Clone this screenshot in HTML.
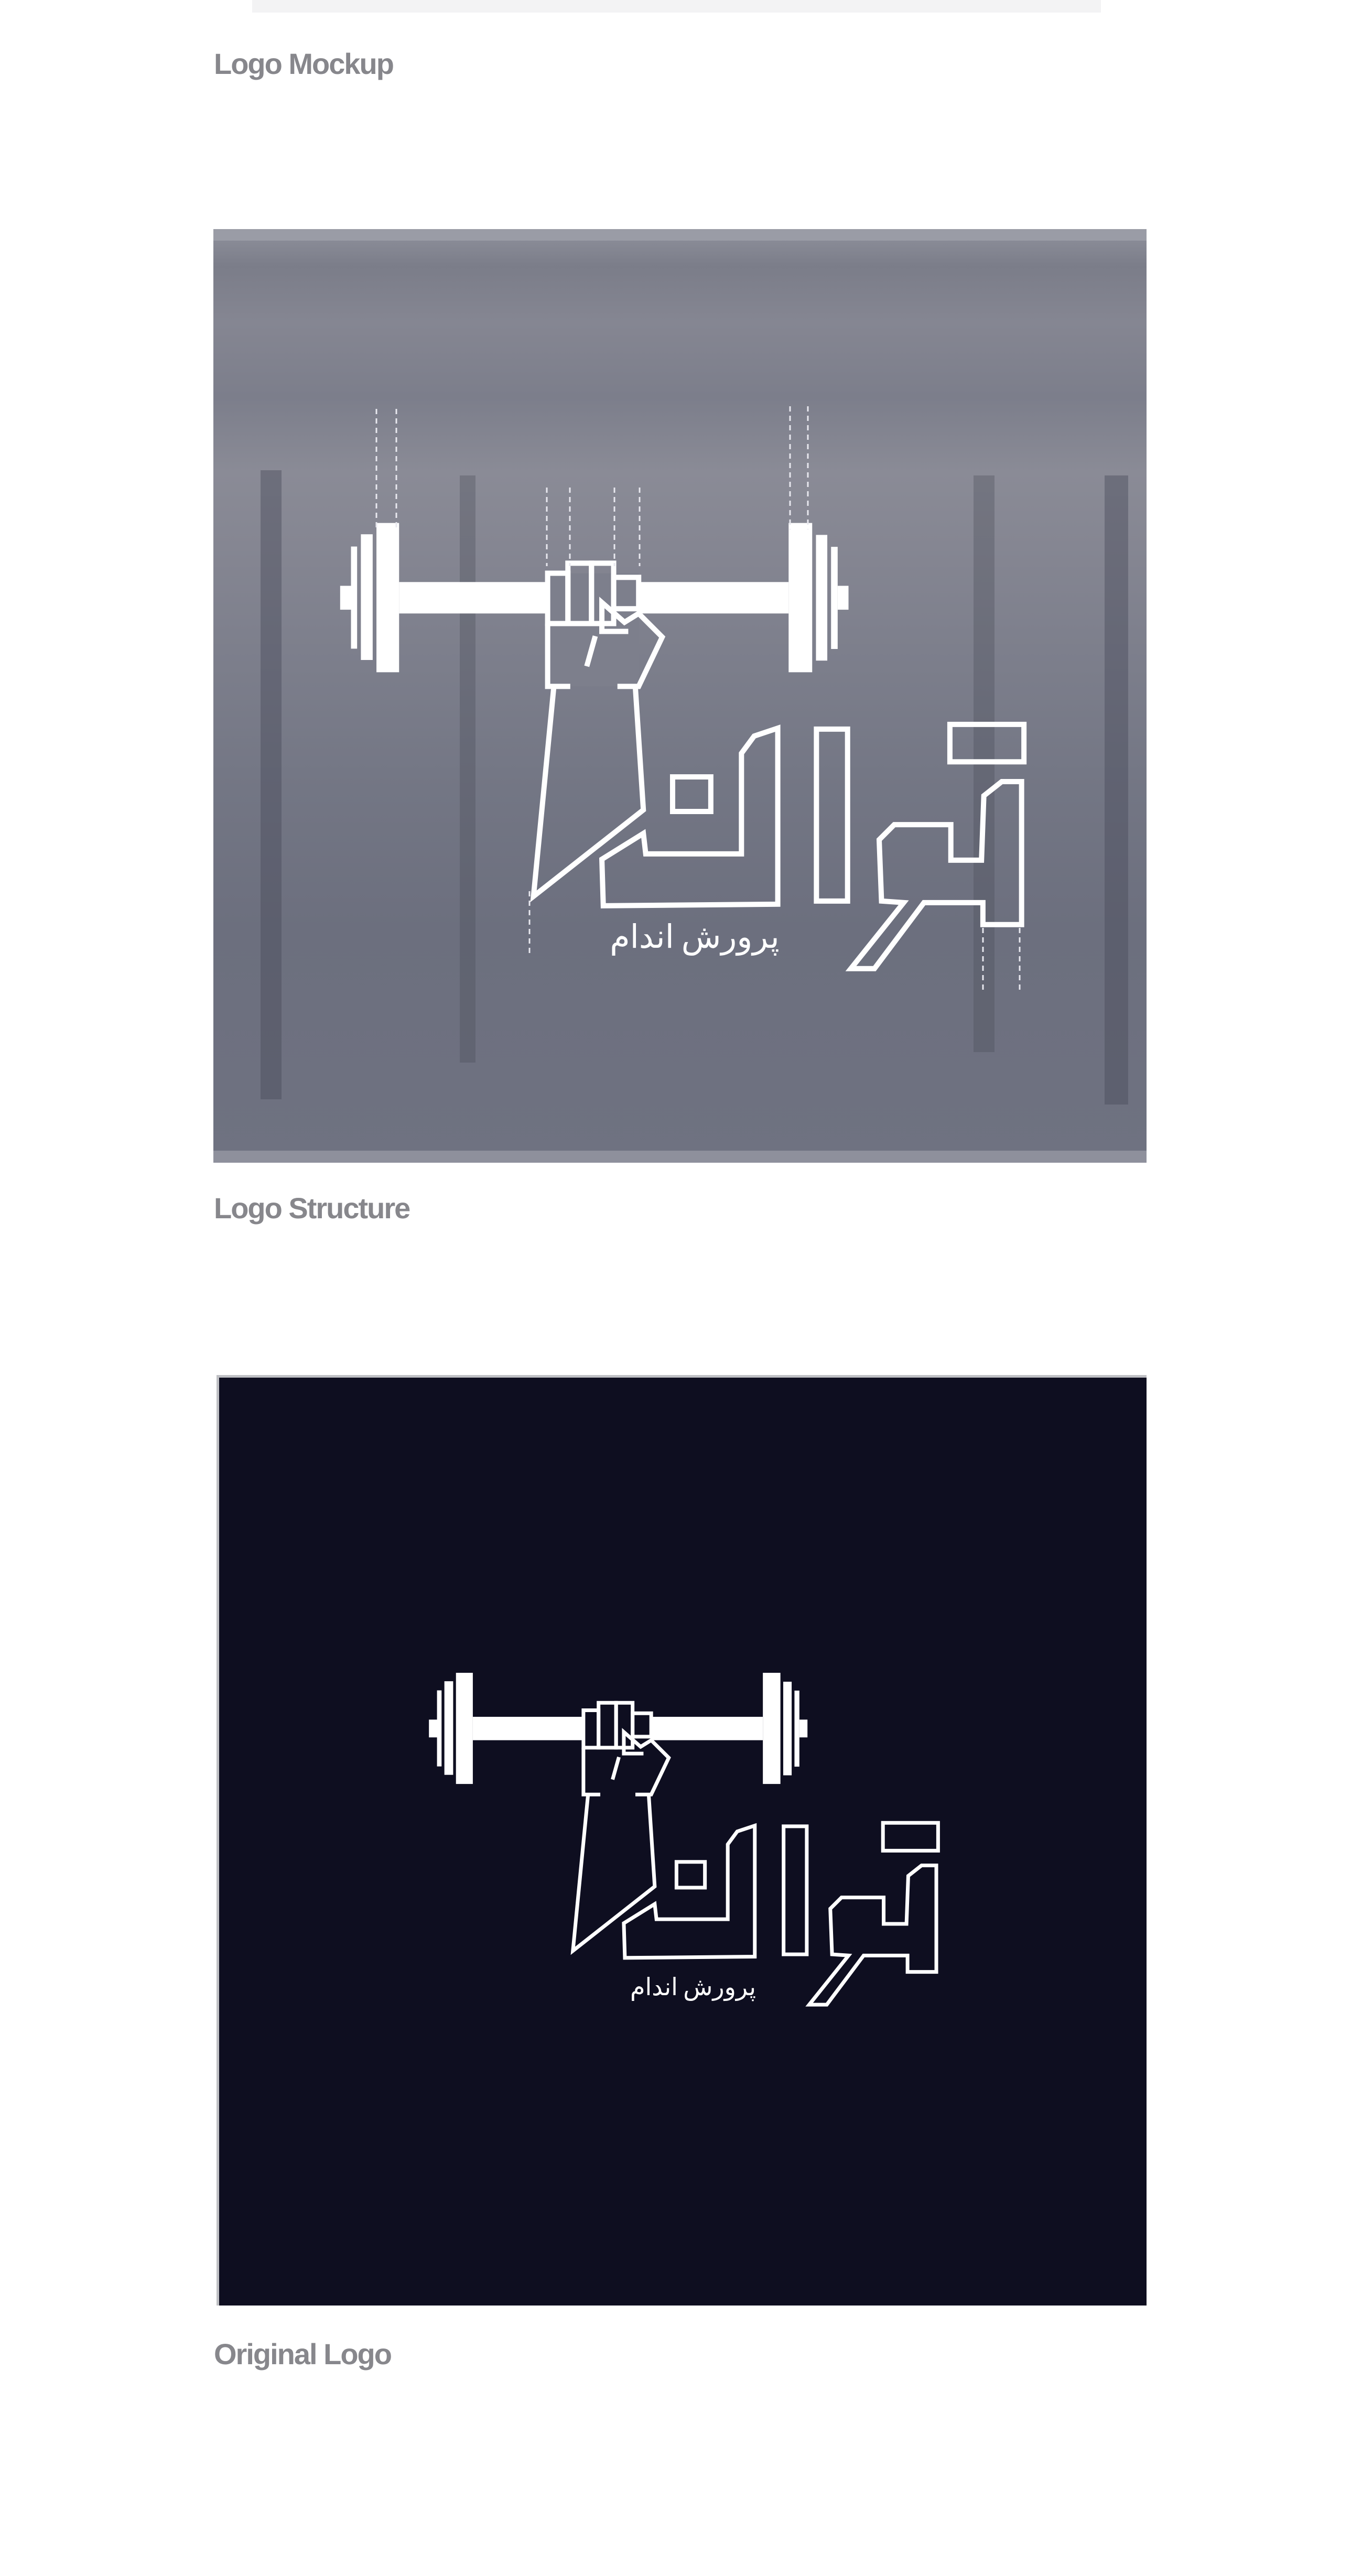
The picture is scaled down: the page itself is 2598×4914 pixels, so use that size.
<!DOCTYPE html>
<html><head><meta charset="utf-8">
<style>
html,body{margin:0;padding:0;background:#fff;}
body{width:2598px;height:4914px;position:relative;overflow:hidden;font-family:"Liberation Sans",sans-serif;}
.cap{position:absolute;left:408px;font-size:56px;font-weight:bold;color:#87878c;letter-spacing:-2px;line-height:1;}
</style></head><body>
<div style="position:absolute;left:481px;top:0;width:1619px;height:24px;background:#f3f3f4;"></div>
<div class="cap" style="top:94px;">Logo Mockup</div>

<div style="position:absolute;left:407px;top:437px;width:1780px;height:1781px;background:linear-gradient(180deg,#8f919c 0%,#7b7d89 4%,#858692 10%,#7c7e8b 18%,#8a8b96 26%,#858692 34%,#7d7f8c 45%,#737684 60%,#6c6f7e 75%,#6f7281 100%);overflow:hidden;">
 <div style="position:absolute;left:0;top:0;width:100%;height:22px;background:#9a9ca6"></div>
 <div style="position:absolute;left:0;top:1758px;width:100%;height:23px;background:#8e909c"></div>
 <div style="position:absolute;left:90px;top:460px;width:40px;height:1200px;background:#4a4c5a;opacity:.45"></div>
 <div style="position:absolute;left:470px;top:470px;width:30px;height:1120px;background:#4a4c5a;opacity:.35"></div>
 <div style="position:absolute;left:1450px;top:470px;width:40px;height:1100px;background:#4a4c5a;opacity:.35"></div>
 <div style="position:absolute;left:1700px;top:470px;width:45px;height:1200px;background:#4a4c5a;opacity:.45"></div>
</div>

<div class="cap" style="top:2277px;">Logo Structure</div>

<div style="position:absolute;left:413px;top:2623px;width:1774px;height:1775px;background:#bfc0c4;"></div>
<div style="position:absolute;left:418px;top:2628px;width:1769px;height:1770px;background:#0e0e20;"></div>

<div class="cap" style="top:4463px;">Original Logo</div>

<svg style="position:absolute;left:0;top:0" width="2598" height="4914" viewBox="0 0 2598 4914">
<defs>
<g id="lg">
 <g fill="#fff">
  <rect x="57" y="292" width="24" height="76"/>
  <rect x="80" y="167" width="13" height="325"/>
  <rect x="101" y="128" width="25" height="400"/>
  <rect x="134" y="92" width="48" height="475"/>
  <rect x="182" y="280" width="826" height="100"/>
  <rect x="1008" y="92" width="50" height="475"/>
  <rect x="1066" y="130" width="24" height="400"/>
  <rect x="1098" y="168" width="14" height="325"/>
  <rect x="1112" y="292" width="23" height="76"/>
 </g>
 <g fill="none" stroke="#fff" stroke-linejoin="miter">
  <rect x="497" y="252" width="193" height="360" style="fill:var(--fc)" vector-effect="non-scaling-stroke" stroke="none"/>
  <rect x="497" y="252" width="43" height="160" vector-effect="non-scaling-stroke"/>
  <rect x="540" y="220" width="50" height="192" vector-effect="non-scaling-stroke"/>
  <rect x="590" y="220" width="47" height="192" vector-effect="non-scaling-stroke"/>
  <rect x="637" y="265" width="53" height="100" vector-effect="non-scaling-stroke"/>
  <path d="M497 412 L497 612 L545 612 M645 612 L690 612 L740 455 L690 380 L660 408 L612 345 L612 437 L668 437 M598 452 L580 548" vector-effect="non-scaling-stroke"/>
  <path d="M510 615 L467 1280 L700 1005 L683 615" vector-effect="non-scaling-stroke"/>
  <path d="M612 1162 L700 1080 L705 1145 L908 1145 L908 825 L935 770 L985 745 L985 1305 L615 1310 Z" vector-effect="non-scaling-stroke"/>
  <rect x="762" y="900" width="81" height="110" vector-effect="non-scaling-stroke"/>
  <rect x="1067" y="748" width="66" height="547" vector-effect="non-scaling-stroke"/>
  <path d="M1502 915 L1460 915 L1422 960 L1417 1165 L1352 1165 L1352 1052 L1232 1052 L1200 1100 L1205 1295 L1252 1300 L1140 1510 L1190 1510 L1295 1300 L1420 1300 L1420 1370 L1502 1370 Z" vector-effect="non-scaling-stroke"/>
  <rect x="1350" y="733" width="157" height="119" vector-effect="non-scaling-stroke"/>
 </g>
</g>
</defs>
<!-- original logo -->
<g transform="translate(780 3150) scale(0.6698 0.4464)" stroke-width="7" style="--fc:#0e0e20">
 <use href="#lg"/>
</g>
<text x="1322" y="3806" text-anchor="middle" fill="#fff" font-size="46" font-family="'Noto Sans CJK SC','DejaVu Sans',sans-serif">پرورش اندام</text>

<!-- structure logo -->
<g transform="translate(-450 -3288) scale(1.343)">
 <g transform="translate(780 3150) scale(0.6698 0.4464)" stroke-width="10" style="--fc:#7d7f8c">
  <use href="#lg"/>
 </g>
</g>
<text x="1325" y="1808" text-anchor="middle" fill="#fff" font-size="62" font-family="'Noto Sans CJK SC','DejaVu Sans',sans-serif">پرورش اندام</text>
<g stroke="#e8e8ef" stroke-width="3" stroke-dasharray="10 8" fill="none">
 <line x1="718" y1="780" x2="718" y2="1010"/>
 <line x1="756" y1="780" x2="756" y2="1010"/>
 <line x1="1507" y1="775" x2="1507" y2="1010"/>
 <line x1="1541" y1="775" x2="1541" y2="1010"/>
 <line x1="1043" y1="930" x2="1043" y2="1080"/>
 <line x1="1087" y1="930" x2="1087" y2="1080"/>
 <line x1="1172" y1="930" x2="1172" y2="1080"/>
 <line x1="1220" y1="930" x2="1220" y2="1080"/>
 <line x1="1010" y1="1700" x2="1010" y2="1820"/>
 <line x1="1875" y1="1770" x2="1875" y2="1890"/>
 <line x1="1945" y1="1770" x2="1945" y2="1890"/>
</g>
</svg>
</body></html>
